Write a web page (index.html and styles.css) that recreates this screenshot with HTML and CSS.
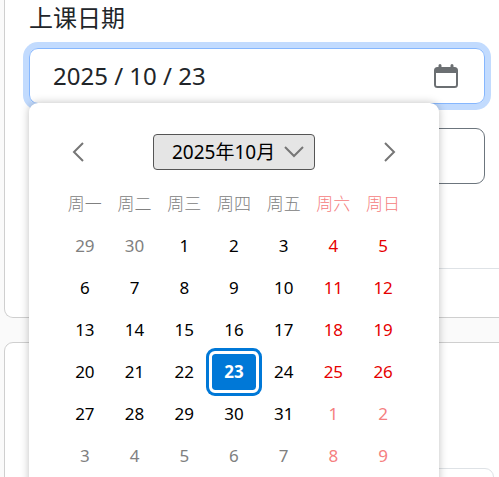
FILE: index.html
```html
<!DOCTYPE html>
<html lang="zh-CN">
<head>
    <meta charset="UTF-8">
    <meta name="viewport" content="width=device-width, initial-scale=1">
    <title>上课日期</title>
    <link rel="stylesheet" href="styles.css">
</head>
<body>
    <main class="page">
        <form class="card">
            <div class="card-body">
                <label for="classDate">上课日期</label>
                <div class="date-field">
                    <input type="text" id="classDate" class="date-input" value="2025 / 10 / 23">
                    <button type="button" class="date-toggle" aria-label="打开日历">
                        <svg width="24" height="24" viewBox="0 0 24 24">
                            <path fill="#6b6f72" fill-rule="evenodd" d="M4.500 1.500a1.500 1.500 0 0 1 3 0V3h9V1.500a1.500 1.500 0 0 1 3 0V3h1a3.500 3.500 0 0 1 3.500 3.500v14a3.500 3.500 0 0 1-3.500 3.500h-17A3.500 3.500 0 0 1 0 20.500v-14A3.500 3.500 0 0 1 3.500 3h1zM2 9v12a1 1 0 0 0 1 1h18a1 1 0 0 0 1-1V9z"/>
                        </svg>
                    </button>

                    <!-- Calendar dropdown -->
                    <div class="calendar">
                        <div class="calendar-header">
                            <button type="button" class="nav-btn" aria-label="上个月">
                                <svg width="12" height="20" viewBox="0 0 12 20"><path d="M11 1L2 10l9 9"/></svg>
                            </button>
                            <button type="button" class="month-btn">
                                2025年10月
                                <svg width="20" height="12" viewBox="0 0 20 12"><path d="M1 1l9 9 9-9"/></svg>
                            </button>
                            <button type="button" class="nav-btn" aria-label="下个月">
                                <svg width="12" height="20" viewBox="0 0 12 20"><path d="M1 1l9 9-9 9"/></svg>
                            </button>
                        </div>
                        <table class="days">
                            <thead>
                                <tr><th>周一</th><th>周二</th><th>周三</th><th>周四</th><th>周五</th><th>周六</th><th>周日</th></tr>
                            </thead>
                            <tbody>
                                <tr><td class="other">29</td><td class="other">30</td><td>1</td><td>2</td><td>3</td><td>4</td><td>5</td></tr>
                                <tr><td>6</td><td>7</td><td>8</td><td>9</td><td>10</td><td>11</td><td>12</td></tr>
                                <tr><td>13</td><td>14</td><td>15</td><td>16</td><td>17</td><td>18</td><td>19</td></tr>
                                <tr><td>20</td><td>21</td><td>22</td><td><button type="button" class="selected">23</button></td><td>24</td><td>25</td><td>26</td></tr>
                                <tr><td>27</td><td>28</td><td>29</td><td>30</td><td>31</td><td class="other">1</td><td class="other">2</td></tr>
                                <tr><td class="other">3</td><td class="other">4</td><td class="other">5</td><td class="other">6</td><td class="other">7</td><td class="other">8</td><td class="other">9</td></tr>
                            </tbody>
                        </table>
                    </div>
                </div>
                <button type="button" class="outline-btn" aria-label="重置"></button>
            </div>
            <div class="card-footer"></div>
        </form>

        <section class="card card-list">
            <div class="list-box"></div>
        </section>
    </main>
</body>
</html>
```

FILE: styles.css
```css
* {
    box-sizing: border-box;
}

body {
    margin: 0;
    background: #fafafa;
    color: #212529;
    font-family: "Noto Sans", "Noto Sans CJK SC", sans-serif;
    font-size: 24px;
    line-height: 36px;
    overflow: hidden;
}

button, input {
    font: inherit;
    color: inherit;
}

.page {
    display: flex;
    flex-direction: column;
    gap: 24px;
    margin: 0 -12px 0 4px;
}

.card {
    background: #fff;
    border: 1px solid #cfcfcf;
    border-radius: 9px;
}

form.card {
    border-top: 0;
    border-radius: 0 0 9px 9px;
}

.card-body {
    padding: 0 25px 84px 24px;
}

.card-body label {
    display: block;
    margin-bottom: 12px;
}

.date-field {
    position: relative;
    display: flex;
    align-items: center;
    height: 56px;
    margin-bottom: 24px;
    padding: 0 26px 0 23px;
    border: 1px solid #86b7fe;
    border-radius: 9px;
    box-shadow: 0 0 0 6px #c2dbfe;
}

.date-input {
    flex: 1;
    min-width: 0;
    padding: 0;
    border: 0;
    background: none;
    outline: none;
}

.date-toggle {
    display: flex;
    padding: 0;
    border: 0;
    background: none;
}

.outline-btn {
    display: block;
    width: 100%;
    height: 56px;
    background: #fff;
    border: 1px solid #6c757d;
    border-radius: 9px;
}

.card-footer {
    height: 49px;
    margin-left: 24px;
    border-top: 1px solid #dee2e6;
}

/* Calendar */
.calendar {
    position: absolute;
    top: 100%;
    left: -1px;
    width: 410px;
    padding: 31px;
    background: #fff;
    border-radius: 9px;
    box-shadow: 0 0 8px rgba(0, 0, 0, 0.25);
    color: #000;
    font-size: 17px;
    line-height: 24px;
}

.calendar-header {
    display: flex;
    justify-content: space-between;
    align-items: center;
    margin-bottom: 13px;
}

.calendar svg {
    fill: none;
    stroke: #767676;
    stroke-width: 2;
}

.nav-btn {
    display: flex;
    justify-content: center;
    width: 36px;
    padding: 0;
    border: 0;
    background: none;
}

.month-btn {
    display: flex;
    align-items: center;
    justify-content: space-between;
    width: 162px;
    height: 36px;
    padding: 0 10px 0 18px;
    background: #e5e5e5;
    border: 1px solid #555;
    border-radius: 4px;
    font-size: 19px;
    white-space: nowrap;
}

.days {
    width: 100%;
    table-layout: fixed;
    border-collapse: collapse;
}

.days th, .days td {
    height: 42px;
    padding: 0;
    text-align: center;
}

.days th {
    color: #808080;
    font-weight: 300;
}

.days td:nth-child(n+6) {
    color: #e60000;
}

.days td.other {
    color: #808080;
}

.days th:nth-child(n+6), .days td.other:nth-child(n+6) {
    color: #f58080;
}

.selected {
    display: block;
    width: 100%;
    height: 42px;
    padding: 0;
    background: #0078d7;
    background-clip: padding-box;
    border: 3px solid #fff;
    border-radius: 6px;
    box-shadow: 0 0 0 3px #0078d7;
    color: #fff;
    font-weight: bold;
}

.card-list {
    height: 300px;
    padding: 125px 16px 0 24px;
}

.list-box {
    height: 120px;
    border: 1px solid #dee2e6;
    border-radius: 9px;
}
```
